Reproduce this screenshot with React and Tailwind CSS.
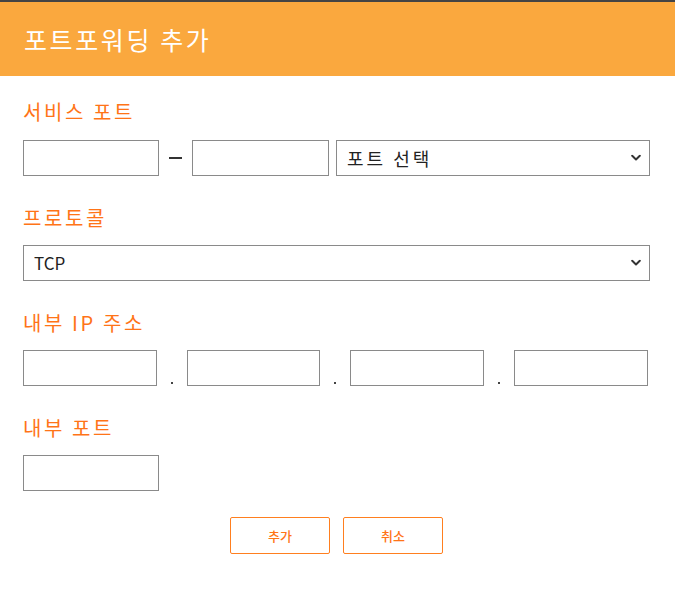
import React from "react";

const font = { fontFamily: '"Noto Sans CJK KR", "Noto Sans", sans-serif' };

function Chevron() {
  return (
    <svg className="pointer-events-none absolute right-[9px] top-1/2 -translate-y-1/2" width="10" height="7" viewBox="0 0 10 7" fill="none">
      <path d="M1.2 1.3 L5 5 L8.8 1.3" stroke="#333" strokeWidth="2" strokeLinecap="round" strokeLinejoin="round" />
    </svg>
  );
}

function Label({ children }) {
  return <div className="text-[20px] leading-[28px] tracking-[2.6px] text-[#ff7417]">{children}</div>;
}

const inputCls = "h-[36px] border border-[#8a8a8a] bg-white outline-none px-2 text-[17px]";

export default function App() {
  return (
    <div className="w-[675px] h-[589px] bg-white" style={font}>
      <div className="border-t-2 border-[#444444] bg-[#faa83e] h-[76px] flex items-center pl-[24px]">
        <span className="text-white text-[25px] leading-none tracking-[2.6px]">포트포워딩 추가</span>
      </div>
      <div className="px-[23px] pt-[22px]">
        <Label>서비스 포트</Label>
        <div className="mt-[14px] flex items-center">
          <input className={`${inputCls} w-[136px]`} />
          <div className="w-[33px] flex justify-center">
            <div className="w-[13px] h-[2px] bg-[#333]" />
          </div>
          <input className={`${inputCls} w-[137px]`} />
          <div className="relative ml-[7px] w-[314px]">
            <select className={`${inputCls} w-full appearance-none pl-[10px] text-[18px] tracking-[3px] text-[#222]`} style={font} defaultValue="">
              <option value="">포트 선택</option>
            </select>
            <Chevron />
          </div>
        </div>

        <div className="mt-[28px]">
          <Label>프로토콜</Label>
        </div>
        <div className="relative mt-[13px] w-[627px]">
          <select className={`${inputCls} w-full appearance-none pl-[10px] text-[#222]`} style={font} defaultValue="TCP">
            <option>TCP</option>
            <option>UDP</option>
          </select>
          <Chevron />
        </div>

        <div className="mt-[28px]">
          <Label>내부 IP 주소</Label>
        </div>
        <div className="mt-[13px] flex items-end">
          <input className={`${inputCls} w-[134px]`} />
          <div className="w-[30px] flex justify-center pb-[2px]"><div className="w-[2px] h-[2px] bg-[#444]" /></div>
          <input className={`${inputCls} w-[133px]`} />
          <div className="w-[30px] flex justify-center pb-[2px]"><div className="w-[2px] h-[2px] bg-[#444]" /></div>
          <input className={`${inputCls} w-[134px]`} />
          <div className="w-[30px] flex justify-center pb-[2px]"><div className="w-[2px] h-[2px] bg-[#444]" /></div>
          <input className={`${inputCls} w-[134px]`} />
        </div>

        <div className="mt-[28px]">
          <Label>내부 포트</Label>
        </div>
        <div className="mt-[13px]">
          <input className={`${inputCls} w-[136px]`} />
        </div>

        <div className="mt-[26px] flex justify-center gap-[13px] pr-[2px]">
          <button className="w-[100px] h-[37px] border border-[#ff7f1f] rounded-[2px] text-[13px] font-medium text-[#ff7417] bg-white" style={font}>추가</button>
          <button className="w-[100px] h-[37px] border border-[#ff7f1f] rounded-[2px] text-[13px] font-medium text-[#ff7417] bg-white" style={font}>취소</button>
        </div>
      </div>
    </div>
  );
}
